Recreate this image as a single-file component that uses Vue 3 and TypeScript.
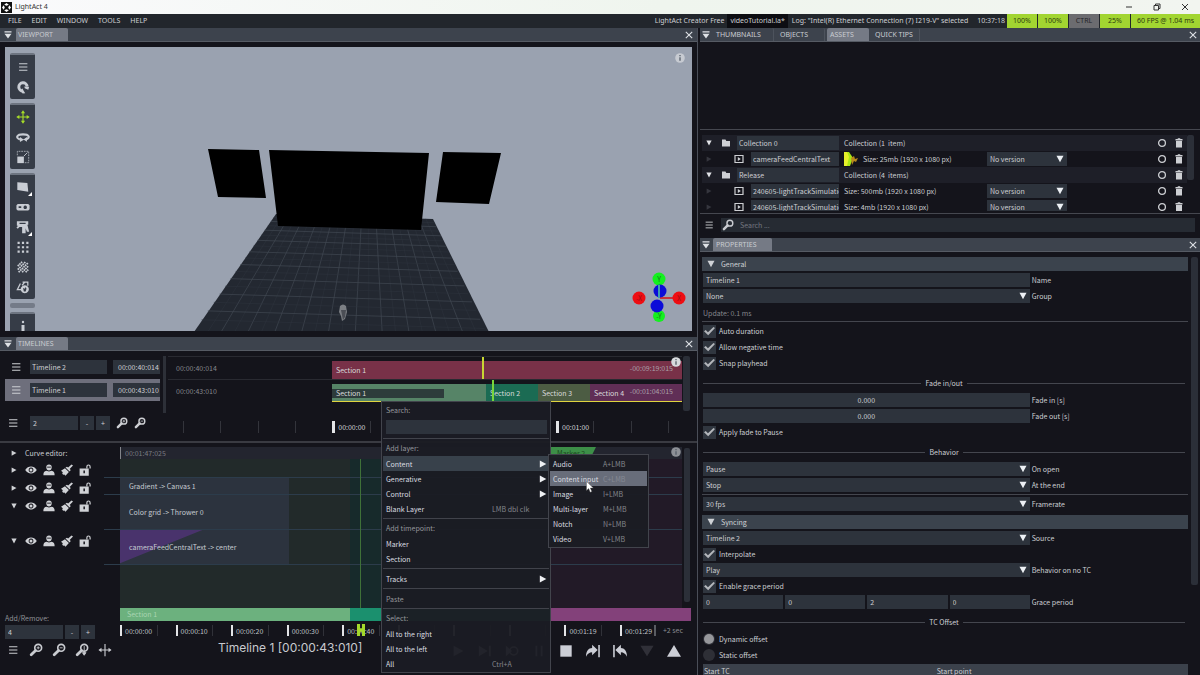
<script setup lang="ts">
import { ref } from 'vue'

const menus = ['FILE', 'EDIT', 'WINDOW', 'TOOLS', 'HELP']
const assetTabs = ['THUMBNAILS', 'OBJECTS', 'ASSETS', 'QUICK TIPS']

interface Asset { name: string; info: string; group?: boolean; thumb?: boolean }
const assets: Asset[] = [
  { name: 'Collection 0', info: 'Collection (1  item)', group: true },
  { name: 'cameraFeedCentralText', info: 'Size: 25mb (1920 x 1080 px)', thumb: true },
  { name: 'Release', info: 'Collection (4  items)', group: true },
  { name: '240605-lightTrackSimulation', info: 'Size: 500mb (1920 x 1080 px)' },
  { name: '240605-lightTrackSimulation', info: 'Size: 4mb (1920 x 1080 px)' },
]

type Kind = 'head' | 'text' | 'select' | 'num' | 'check' | 'radio' | 'quad' | 'sep' | 'line' | 'note'
interface Prop { kind: Kind; label?: string; value?: string; on?: boolean }
const props: Prop[] = [
  { kind: 'head', label: 'General' },
  { kind: 'text', label: 'Name', value: 'Timeline 1' },
  { kind: 'select', label: 'Group', value: 'None' },
  { kind: 'note', label: 'Update: 0.1 ms' },
  { kind: 'line' },
  { kind: 'check', label: 'Auto duration' },
  { kind: 'check', label: 'Allow negative time' },
  { kind: 'check', label: 'Snap playhead' },
  { kind: 'sep', label: 'Fade in/out' },
  { kind: 'num', label: 'Fade in [s]', value: '0.000' },
  { kind: 'num', label: 'Fade out [s]', value: '0.000' },
  { kind: 'check', label: 'Apply fade to Pause' },
  { kind: 'sep', label: 'Behavior' },
  { kind: 'select', label: 'On open', value: 'Pause' },
  { kind: 'select', label: 'At the end', value: 'Stop' },
  { kind: 'line' },
  { kind: 'select', label: 'Framerate', value: '30 fps' },
  { kind: 'head', label: 'Syncing' },
  { kind: 'select', label: 'Source', value: 'Timeline 2' },
  { kind: 'check', label: 'Interpolate' },
  { kind: 'select', label: 'Behavior on no TC', value: 'Play' },
  { kind: 'check', label: 'Enable grace period' },
  { kind: 'quad', label: 'Grace period' },
  { kind: 'sep', label: 'TC Offset' },
  { kind: 'radio', label: 'Dynamic offset', on: true },
  { kind: 'radio', label: 'Static offset', on: false },
]
const grace = ['0', '0', '2', '0']

const toolGroups = [
  ['burger', 'magnet'],
  ['move', 'rotate', 'scale'],
  ['screen', 'projector', 'fixture', 'dots', 'hatch', 'shapes'],
]

interface MenuRow { t: 'item' | 'title' | 'line' | 'input'; label?: string; key?: string; sub?: boolean; hot?: boolean; off?: boolean }
const context: MenuRow[] = [
  { t: 'title', label: 'Search:' },
  { t: 'input' },
  { t: 'line' },
  { t: 'title', label: 'Add layer:' },
  { t: 'item', label: 'Content', sub: true, hot: true },
  { t: 'item', label: 'Generative', sub: true },
  { t: 'item', label: 'Control', sub: true },
  { t: 'item', label: 'Blank Layer', key: 'LMB dbl clk' },
  { t: 'line' },
  { t: 'title', label: 'Add timepoint:' },
  { t: 'item', label: 'Marker' },
  { t: 'item', label: 'Section' },
  { t: 'line' },
  { t: 'item', label: 'Tracks', sub: true },
  { t: 'line' },
  { t: 'item', label: 'Paste', off: true },
  { t: 'line' },
  { t: 'title', label: 'Select:' },
  { t: 'item', label: 'All to the right' },
  { t: 'item', label: 'All to the left' },
  { t: 'item', label: 'All', key: 'Ctrl+A' },
]
const submenu = [
  ['Audio', 'A+LMB'],
  ['Content input', 'C+LMB'],
  ['Image', 'I+LMB'],
  ['Multi-layer', 'M+LMB'],
  ['Notch', 'N+LMB'],
  ['Video', 'V+LMB'],
]
const hovered = ref(1)

const overview = ['', '', '', '', '00:00:00', '', '', '', '', '', '00:01:00', '', '', '']
const ruler = ['00:00:00', '00:00:10', '00:00:20', '00:00:30', '00:00:40', '', '', '', '00:01:19', '00:01:29']
const layerRows = [
  { open: false, size: 'short' },
  { open: false, size: 'short' },
  { open: true, size: 'tall' },
  { open: true, size: 'tall' },
]

const gridLines: { d: string; strong: boolean }[] = []
for (let i = 1; i < 22; i++) {
  const f = i / 22
  gridLines.push({ d: `M${276 + 157 * f} ${214 + 5 * f}L${195 + 294 * f} 331`, strong: i % 2 === 0 })
}
for (let i = 1; i < 18; i++) {
  const p = i / 18
  const f = p * (0.53 + 0.47 * p)
  gridLines.push({ d: `M${276 - 81 * f} ${214 + 115 * f}L${433 + 56 * f} ${219 + 119 * f}`, strong: i % 2 === 0 })
}
</script>

<template>
  <div class="app">
    <svg class="defs" aria-hidden="true">
      <symbol id="down" viewBox="0 0 8 8"><path d="M.5.800h7L4 7.300z" /></symbol>
      <symbol id="right" viewBox="0 0 8 8"><path d="M.8.500v7L7.300 4z" /></symbol>
      <symbol id="drop" viewBox="0 0 8 8"><path d="M.5.3h7v1.200h-7zM.5 2.800h7L4 7.500z" /></symbol>
      <symbol id="close" viewBox="0 0 8 8"><path d="M.8.800l6.400 6.400M7.200.8L.8 7.200" fill="none" stroke="currentColor" stroke-width="1.100" /></symbol>
      <symbol id="burger" viewBox="0 0 16 16"><path d="M3.500 4.200h9.500M3.500 8h9.500M3.500 11.800h9.500" fill="none" stroke="currentColor" stroke-width="1.200" /></symbol>
      <symbol id="magnet" viewBox="0 0 16 16"><path d="M8 12.800A4.800 4.800 0 1 1 12.800 7.500" fill="none" stroke="currentColor" stroke-width="3.400" /><path d="M7 9.500l3.500 5.500-3 .5L5.500 12zM9.500 7.500l5.500.5-1 3-4-1.500z" /></symbol>
      <symbol id="move" viewBox="0 0 16 16"><path d="M8 2v12M2 8h12" stroke="currentColor" stroke-width="1.300" /><path d="M8 .3l2.400 3.500H5.600zM8 15.700l2.400-3.500H5.600zM.3 8l3.500-2.400v4.800zM15.700 8l-3.500-2.400v4.800z" /></symbol>
      <symbol id="rotate" viewBox="0 0 16 16"><path d="M4.500 10.800C-1 9 1 5 8 5s9 4 3 5.800" fill="none" stroke="currentColor" stroke-width="2.300" /><path d="M4.500 8l4.500 3-4.500 2.800zM12.500 8l-4 2.800 4 2.600z" /></symbol>
      <symbol id="scale" viewBox="0 0 16 16"><path d="M1.500 7.500H9V15H1.500z" /><path d="M1.500 6V1.500h13v13H10" fill="none" stroke="currentColor" stroke-width=".8" stroke-dasharray="2 1" /><path d="M9 7l4-4" stroke="currentColor" /></symbol>
      <symbol id="screen" viewBox="0 0 16 16"><path d="M1.500 2.500L13 3.500l1 10-12.500-2z" /></symbol>
      <symbol id="projector" viewBox="0 0 16 16"><path fill-rule="evenodd" d="M2 4.500h12l1.500 1.500v4.500L14 12H2L.5 10.500V6zM3 7v2.200h3V7zM10.500 6.300a2 2 0 1 0 .1 0z" /></symbol>
      <symbol id="fixture" viewBox="0 0 16 16"><path fill-rule="evenodd" d="M1 1.500h13v4h-1l2 8h-2.500L11 9.500V15H7V8H4L2 10 .5 8.500l2-2H1zM4 3.200v1.500h7V3.200z" /></symbol>
      <symbol id="dots" viewBox="0 0 16 16"><path d="M3 2v12.500M8 2v12.500M13 2v12.500" fill="none" stroke="currentColor" stroke-width="2.500" stroke-dasharray="2.500 2.500" /></symbol>
      <symbol id="hatch" viewBox="0 0 16 16"><path d="M2 7l5-5M2 11l9-9M3 14L14 3M7 14l7-7M11 14l3-3" fill="none" stroke="currentColor" stroke-width="2" stroke-dasharray="1.900 .7" /></symbol>
      <symbol id="shapes" viewBox="0 0 16 16"><path d="M5 4L1.500 11H6M7.500 2.500H13.500v4M7 6l3-3.500" fill="none" stroke="currentColor" stroke-width="1.400" /><path fill-rule="evenodd" d="M10 6a4.600 4.600 0 1 0 .1 0zM8 9l2 1 1-2 1 2-1 3H9z" /></symbol>
      <symbol id="eye" viewBox="0 0 16 16"><path fill-rule="evenodd" d="M.3 8C4 1.800 12 1.800 15.700 8 12 14.200 4 14.200.3 8zM8 4.800a3.200 3.200 0 1 0 .1 0z" /><circle cx="8" cy="8" r="2" /></symbol>
      <symbol id="person" viewBox="0 0 16 16"><path d="M8 .5a3.600 3.600 0 0 1 3.600 3.700C11.600 7 9.800 8.500 8 8.500S4.400 7 4.400 4.200A3.600 3.600 0 0 1 8 .5zM4.500 9L8 10l3.500-1c2.800.5 4 2 4 6H.5c0-4 1.200-5.500 4-6z" /><path d="M5.500 4.200h5" stroke="#14141b" stroke-width="1.200" /></symbol>
      <symbol id="brush" viewBox="0 0 16 16"><path d="M14 .5L16 2l-4.500 4.500 1.500 1.500-1.500 2L6 4.800 8 3.500l1.500 1zM5.300 5.500l5.200 5.200-4.500 5-2-2.200-1 1-1.500-2.200 1-1.300L0 9z" /></symbol>
      <symbol id="lock" viewBox="0 0 16 16"><path fill-rule="evenodd" d="M.8 6H13v9.500H.8zM5.900 8.500v3.800h2V8.500z" /><path d="M10.500 6V3.500a2 2 0 0 1 4.300 0V6" fill="none" stroke="currentColor" stroke-width="1.600" /></symbol>
      <symbol id="zoom" viewBox="0 0 16 16"><circle cx="10.500" cy="5.500" r="3.900" fill="none" stroke="currentColor" stroke-width="1.900" /><path d="M7.500 8.500L2.500 13.500" stroke="currentColor" stroke-width="3.200" stroke-linecap="round" /></symbol>
      <symbol id="zoomin" viewBox="0 0 16 16"><use href="#zoom" /><path d="M10.500 3.800v3.400M8.800 5.500h3.400" stroke="currentColor" /></symbol>
      <symbol id="zoomout" viewBox="0 0 16 16"><use href="#zoom" /><path d="M8.800 5.500h3.400" stroke="currentColor" /></symbol>
      <symbol id="zoomfit" viewBox="0 0 16 16"><use href="#zoom" /><path d="M10.500 3.500V13M8.500 11l2 3 2-3z" stroke="currentColor" /></symbol>
      <symbol id="fit" viewBox="0 0 16 16"><path d="M8 1v14M2 8h12" stroke="currentColor" stroke-width="1.300" /><path d="M.5 8L4 5.300v5.400zM15.500 8L12 5.300v5.400z" /></symbol>
      <symbol id="folder" viewBox="0 0 8 8"><path d="M0 .5h3.500L4.300 2H8v5.500H0z" /></symbol>
      <symbol id="clip" viewBox="0 0 10 10"><path d="M1 1.500h8v7H1z" fill="none" stroke="currentColor" stroke-width="1.200" /><path d="M3.800 3v4l3-2z" /></symbol>
      <symbol id="ring" viewBox="0 0 10 10"><circle cx="5" cy="5" r="3.400" fill="none" stroke="currentColor" stroke-width="1.300" /></symbol>
      <symbol id="trash" viewBox="0 0 8 10"><path fill-rule="evenodd" d="M.5 1h2l.5-.7h2l.5.700h2v1.400h-7zM1 3h6v6.500H1z" /></symbol>
      <symbol id="info" viewBox="0 0 10 10"><circle cx="5" cy="5" r="4.800" /><path d="M5 4.300v3.500M5 2v1.300" stroke="#555d68" stroke-width="1.300" /></symbol>
      <symbol id="play" viewBox="0 0 16 16"><path d="M3 2l11 6-11 6z" /></symbol>
      <symbol id="next" viewBox="0 0 16 16"><path d="M1 2l10 6-10 6zM12.500 2h2v12h-2z" /></symbol>
      <symbol id="loop" viewBox="0 0 16 16"><path d="M1 2l7 6-7 6z" /><circle cx="10" cy="8" r="4.500" fill="none" stroke="currentColor" stroke-width="1.800" /></symbol>
      <symbol id="pause" viewBox="0 0 16 16"><path d="M4 2h2v12H4zM10 2h2v12h-2z" /></symbol>
      <symbol id="stop" viewBox="0 0 16 16"><path d="M1.500 1.500h13v13h-13z" /></symbol>
      <symbol id="jump" viewBox="0 0 16 16"><path d="M0 14.500C0 8 3 4.500 7 4.500V.8l6.300 6L7 12.800V9.300C4 9.300 1.500 11 0 14.500zM14 1h1.800v14H14z" /></symbol>
      <symbol id="jumpback" viewBox="0 0 16 16"><path d="M16 14.500C16 8 13 4.500 9 4.500V.8l-6.300 6 6.300 6V9.300c3 0 5.500 1.700 7 5.200zM2 1H.2v14H2z" /></symbol>
      <symbol id="triup" viewBox="0 0 16 16"><path d="M8 1l8 13.500H0z" /></symbol>
      <symbol id="tridown" viewBox="0 0 16 16"><path d="M8 14L.5 2h15z" /></symbol>
    </svg>

    <header class="titlebar">
      <svg class="logo" viewBox="0 0 11 11"><path d="M0 0h11v11H0z" /><path d="M5.500 1L7.800 2.700 5.500 3.800 3.200 2.700zM5.500 10L3.200 8.300l2.300-1.100 2.300 1.100zM1 5.500l1.700-2.300 1.100 2.300-1.100 2.300zM10 5.500L8.300 7.800 7.200 5.500l1.100-2.300z" fill="#fff" /></svg>
      <span>LightAct 4</span>
      <div class="wincontrols">
        <button aria-label="Minimize"><svg viewBox="0 0 8 8"><path d="M1 4h6" stroke="#333" /></svg></button>
        <button aria-label="Restore"><svg viewBox="0 0 8 8"><path d="M1 2.500h4.500V7H1zM2.500 2.500V1H7v4.500H5.500" fill="none" stroke="#333" /></svg></button>
        <button aria-label="Close window"><svg viewBox="0 0 8 8"><path d="M1 1l6 6M7 1L1 7" stroke="#333" /></svg></button>
      </div>
    </header>

    <nav class="menubar">
      <button v-for="m in menus" :key="m">{{ m }}</button>
      <div class="status">
        <span class="edition">LightAct Creator Free</span>
        <span class="file">videoTutorial.la*</span>
        <span class="log">Log: "Intel(R) Ethernet Connection (7) I219-V" selected</span>
        <time class="clock">10:37:18</time>
        <span class="badge">100%</span>
        <span class="badge">100%</span>
        <span class="badge idle">CTRL</span>
        <span class="badge">25%</span>
        <span class="badge wide">60 FPS @ 1.04 ms</span>
      </div>
    </nav>

    <main class="workspace">
      <div class="left">
        <section class="panel viewport">
          <div class="tabs">
            <svg class="i8"><use href="#drop" /></svg>
            <button class="tab active fixed">VIEWPORT</button>
            <button class="x" aria-label="Close viewport"><svg class="i8"><use href="#close" /></svg></button>
          </div>
          <div class="stage">
            <svg class="scene" viewBox="5 47 687 284" preserveAspectRatio="xMidYMid slice">
              <path d="M5 47h687v284H5z" fill="#9aa2b0" />
              <path d="M276 214l157 5 56 113H194z" fill="#232831" />
              <path v-for="(l, i) in gridLines" :key="i" :d="l.d" :class="l.strong ? 'major' : 'minor'" />
              <path d="M208 149l51 1 7 48-48-1zM269 150l160 3-8 77-143-4zM443 152l58 1-12 51-53-2z" fill="#000" />
              <path d="M340 306q3-3 6 0l1 6-2 7-3 2-1-5-2-4z" fill="#7c7f84" /><path d="M341 310h5l-1 7-2 3z" fill="#4b4e55" />
              <path d="M660 298h19" stroke="#c8323c" stroke-width="2" />
              <circle cx="659" cy="279" r="6.500" fill="#14f01e" /><circle cx="659" cy="316" r="6" fill="#14f01e" />
              <circle cx="660" cy="291" r="6.500" fill="#0b0bd8" /><circle cx="657" cy="306" r="6.500" fill="#0b0bd8" />
              <circle cx="639" cy="298" r="6.500" fill="#ee0d12" /><circle cx="679" cy="298" r="6.500" fill="#ee0d12" />
              <path d="M659 285v13" stroke="#3f9cb0" stroke-width="2" />
              <text x="659" y="282" class="axis">Y</text><text x="659" y="319" class="axis">-Y</text>
              <text x="639" y="301" class="axis red">-X</text><text x="679" y="301" class="axis red">X</text>
            </svg>
            <div class="toolbar">
              <div v-for="(g, i) in toolGroups" :key="i" class="toolgroup">
                <button v-for="t in g" :key="t" :aria-label="t" :class="{ on: t === 'move', more: t === 'screen' || t === 'fixture' }">
                  <svg class="i14"><use :href="'#' + t" /></svg>
                </button>
              </div>
              <div class="handle"></div>
              <div class="toolgroup cut"><button aria-label="Person"><svg viewBox="0 0 14 14" class="i14"><circle cx="7" cy="3" r="1.200" /><path d="M5.500 6h3v6h-3z" /></svg></button></div>
            </div>
            <svg class="i10 stageinfo"><use href="#info" /></svg>
          </div>
        </section>

        <section class="panel timelines">
          <div class="tabs">
            <svg class="i8"><use href="#drop" /></svg>
            <button class="tab active fixed">TIMELINES</button>
            <button class="x" aria-label="Close timelines"><svg class="i8"><use href="#close" /></svg></button>
          </div>

          <div class="overview">
            <div class="names">
              <div class="tl"><svg class="i14"><use href="#burger" /></svg><input aria-label="Name of timeline 2" value="Timeline 2" /><output>00:00:40:014</output></div>
              <div class="tl picked"><svg class="i14"><use href="#burger" /></svg><input aria-label="Name of timeline 1" value="Timeline 1" /><output>00:00:43:010</output></div>
              <div class="stepper top">
                <svg class="i14"><use href="#burger" /></svg>
                <input aria-label="Visible timelines" value="2" /><button>-</button><button>+</button>
                <svg class="i12"><use href="#zoomin" /></svg><svg class="i12"><use href="#zoomout" /></svg>
              </div>
            </div>
            <div class="split"></div>
            <div class="lanes">
              <div class="lane"><span class="tc">00:00:40:014</span><div class="bar red"><span>Section 1</span><i>-00:09:19:015</i></div><b class="head h1"></b></div>
              <div class="lane low"><span class="tc">00:00:43:010</span>
                <div class="bar multi"><span class="s1">Section 1</span><span class="s2">Section 2</span><span class="s3">Section 3</span><span class="s4">Section 4</span><i>-00:01:04:015</i></div><b class="head h2"></b>
              </div>
              <div class="ticks">
                <span class="lead"></span>
                <span v-for="(t, i) in overview" :key="i" :class="{ mark: t }">{{ t }}</span>
              </div>
            </div>
            <div class="vbar"></div>
            <svg class="i10 laneinfo"><use href="#info" /></svg>
          </div>

          <div class="editor">
            <div class="layers">
              <div class="curve"><svg class="i6"><use href="#right" /></svg><span>Curve editor:</span></div>
              <div v-for="(l, i) in layerRows" :key="i" class="layer" :class="l.size">
                <svg class="i6"><use :href="l.open ? '#down' : '#right'" /></svg>
                <button aria-label="Visible"><svg class="i12"><use href="#eye" /></svg></button>
                <button aria-label="Solo"><svg class="i12"><use href="#person" /></svg></button>
                <button aria-label="Paint"><svg class="i12"><use href="#brush" /></svg></button>
                <button aria-label="Lock"><svg class="i12"><use href="#lock" /></svg></button>
              </div>
              <label class="addlabel" for="layercount">Add/Remove:</label>
              <div class="stepper"><input id="layercount" value="4" /><button>-</button><button>+</button></div>
            </div>
            <div class="canvas">
              <div class="zones"><i class="z1"></i><i class="z2"></i><i class="z3"></i></div>
              <div class="caption"><span>00:01:47:025</span></div>
              <div class="track short"><div class="clip">Gradient -&gt; Canvas 1</div></div>
              <div class="track tall"><div class="clip">Color grid -&gt; Thrower 0</div></div>
              <div class="track tall"><div class="clip fade">cameraFeedCentralText -&gt; center</div></div>
              <div class="track rest"></div>
              <div class="needle"></div>
              <div class="marker">Marker 2</div>
              <div class="vbar inner"></div>
              <svg class="i10 canvasinfo"><use href="#info" /></svg>
              <div class="sections"><span class="a">Section 1</span><span class="b"></span><span class="c"></span></div>
              <div class="ruler"><span v-for="(r, i) in ruler" :key="i">{{ r }}</span><em>+2 sec</em><b class="grip"></b></div>
            </div>
          </div>

          <footer class="transport">
            <div class="tools">
              <button v-for="t in ['burger', 'zoomin', 'zoomout', 'zoomfit', 'fit']" :key="t" :aria-label="t"><svg class="i14"><use :href="'#' + t" /></svg></button>
            </div>
            <div class="now">Timeline 1 [00:00:43:010]</div>
            <div class="buttons">
              <button v-for="t in ['play', 'next', 'loop', 'pause', 'stop', 'jump', 'jumpback', 'tridown', 'triup']" :key="t" :aria-label="t" :class="{ dim: t === 'tridown' }"><svg class="i14"><use :href="'#' + t" /></svg></button>
            </div>
          </footer>
        </section>
      </div>

      <div class="right">
        <section class="panel assets">
          <div class="tabs">
            <svg class="i8"><use href="#drop" /></svg>
            <button v-for="t in assetTabs" :key="t" class="tab" :class="{ active: t === 'ASSETS' }">{{ t }}</button>
            <button class="x" aria-label="Close assets"><svg class="i8"><use href="#close" /></svg></button>
          </div>
          <div class="blank"></div>
          <div class="list">
            <div class="rows">
              <div v-for="(a, i) in assets" :key="i" class="asset" :class="{ group: a.group }">
                <svg class="i6 arrow" :class="{ faint: !a.group }"><use :href="a.group ? '#down' : '#right'" /></svg>
                <svg class="kind" :class="a.group ? 'i8' : 'i10'"><use :href="a.group ? '#folder' : '#clip'" /></svg>
                <input :value="a.name" :aria-label="'Asset name ' + (i + 1)" />
                <div class="desc">
                  <svg v-if="a.thumb" class="thumb" viewBox="0 0 15 14"><path d="M0 0h5l4 6-3 8H0z" fill="#a8e614" /><path d="M0 0h3l2 5-2 9H0z" fill="#e6f02a" /><path d="M7 6l3-2 1 3 3-1-2 4-2-1-2 4z" fill="#b98a1c" /></svg>
                  <span>{{ a.info }}</span>
                </div>
                <div class="drop version" v-if="!a.group"><select :aria-label="'Version ' + (i + 1)"><option>No version</option></select><svg class="i8"><use href="#down" /></svg></div>
                <div v-else class="version"></div>
                <button aria-label="Reload"><svg class="i10"><use href="#ring" /></svg></button>
                <button aria-label="Delete"><svg class="i10"><use href="#trash" /></svg></button>
              </div>
            </div>
            <div class="vbar"></div>
          </div>
          <div class="search"><svg class="i12"><use href="#burger" /></svg><label for="find"><svg class="i12"><use href="#zoom" /></svg></label><input id="find" placeholder="Search ..." /></div>
        </section>

        <section class="panel properties">
          <div class="tabs">
            <svg class="i8"><use href="#drop" /></svg>
            <button class="tab active wide">PROPERTIES</button>
            <button class="x" aria-label="Close properties"><svg class="i8"><use href="#close" /></svg></button>
          </div>
          <div class="propbody">
            <div class="form">
              <template v-for="(p, i) in props" :key="i">
                <button v-if="p.kind === 'head'" class="head-row"><svg class="i8"><use href="#down" /></svg>{{ p.label }}</button>
                <div v-else-if="p.kind === 'line'" class="line"></div>
                <div v-else-if="p.kind === 'note'" class="note">{{ p.label }}</div>
                <div v-else-if="p.kind === 'sep'" class="sep"><span>{{ p.label }}</span></div>
                <label v-else-if="p.kind === 'check'" class="tick"><input type="checkbox" checked />{{ p.label }}</label>
                <label v-else-if="p.kind === 'radio'" class="tick"><input type="radio" name="offset" :checked="p.on" />{{ p.label }}</label>
                <div v-else class="field">
                  <div v-if="p.kind === 'select'" class="drop"><select :id="'p' + i"><option>{{ p.value }}</option></select><svg class="i8"><use href="#down" /></svg></div>
                  <div v-else-if="p.kind === 'quad'" class="quad"><input v-for="(g, n) in grace" :key="n" :id="n === 0 ? 'p' + i : undefined" :aria-label="'Grace period ' + (n + 1)" :value="g" /></div>
                  <input v-else :id="'p' + i" :value="p.value" :class="{ num: p.kind === 'num' }" />
                  <label :for="'p' + i">{{ p.label }}</label>
                </div>
              </template>
              <table><thead><tr><th>Start TC</th><th>Start point</th></tr></thead></table>
            </div>
            <div class="vbar"></div>
          </div>
        </section>
      </div>
    </main>

    <div class="menu context" role="menu">
      <template v-for="(m, i) in context" :key="i">
        <div v-if="m.t === 'title'" class="mtitle">{{ m.label }}</div>
        <div v-else-if="m.t === 'line'" class="mline"></div>
        <input v-else-if="m.t === 'input'" aria-label="Search layers" />
        <button v-else role="menuitem" :class="{ hot: m.hot, off: m.off }"><span>{{ m.label }}</span><kbd>{{ m.key }}</kbd><svg v-if="m.sub" class="i8"><use href="#right" /></svg></button>
      </template>
    </div>
    <div class="menu sub" role="menu">
      <button v-for="(s, i) in submenu" :key="s[0]" role="menuitem" :class="{ over: hovered === i }" @mouseenter="hovered = i"><span>{{ s[0] }}</span><kbd>{{ s[1] }}</kbd></button>
    </div>
    <svg class="pointer" viewBox="0 0 8 12"><path d="M.5.500v9l2.200-2 1.500 3.800 1.600-.7-1.500-3.600h3z" fill="#fff" stroke="#555" stroke-width=".4" /></svg>
  </div>
</template>

<style>
html, body { background: #13131a; overflow: hidden; }
</style>

<style scoped>
.app { position: relative; height: 100vh; display: flex; flex-direction: column; overflow: hidden; background: #14141b; color: #cdcfd3; font-family: "Noto Sans CJK SC", "Noto Sans", sans-serif; font-size: 7px; line-height: 14px; }
.app * { box-sizing: border-box; }
.defs { position: absolute; width: 0; height: 0; }
button, input, select { font: inherit; color: inherit; border: 0; border-radius: 0; margin: 0; padding: 0; background: none; outline: none; min-width: 0; }
button { display: flex; align-items: center; }
svg { fill: currentColor; display: block; flex: none; }
input, select { height: 14px; background: #2d333c; padding: 0 3px; }
select { appearance: none; width: 100%; display: block; }
.i6 { width: 6px; height: 6px; }
.i8 { width: 8px; height: 8px; }
.i10 { width: 10px; height: 10px; }
.i12 { width: 12px; height: 12px; }
.i14 { width: 14px; height: 14px; }

.titlebar { height: 14px; flex: none; display: flex; align-items: center; gap: 3px; padding-left: 1px; background: linear-gradient(90deg, #fafafc, #eff5ee 55%, #f2f5f0); color: #333; font-family: "Noto Sans", sans-serif; }
.logo { width: 11px; height: 11px; fill: #111; }
.wincontrols { margin-left: auto; display: flex; gap: 20px; padding-right: 11px; }
.wincontrols svg { width: 8px; height: 8px; }
.menubar { height: 14px; flex: none; display: flex; background: #22262c; padding-left: 8px; gap: 10px; font-family: "Noto Sans", sans-serif; }
.status { display: flex; margin-left: auto; white-space: nowrap; gap: 1px; }
.edition { padding-right: 2px; }
.file { background: #0d0d12; padding: 0 3px; }
.log { padding: 0 8px 0 3px; }
.clock { padding-right: 1px; }
.badge { width: 30px; text-align: center; background: #a2d531; color: #2c3a10; }
.badge.idle { background: #6c6c70; color: #26262a; }
.badge.wide { width: 69px; }

.workspace { flex: 1; min-height: 0; display: grid; grid-template-columns: 698fr 502fr; }
.left, .right { min-width: 0; min-height: 0; display: grid; }
.left { grid-template-rows: minmax(0, 309fr) minmax(0, 338fr); border-right: 1px solid #4a4e58; }
.right { grid-template-rows: minmax(0, 210fr) minmax(0, 437fr); padding-left: 2px; }
.panel { display: flex; flex-direction: column; min-height: 0; min-width: 0; }
.tabs { height: 14px; flex: none; display: flex; align-items: center; background: #3d434d; border-bottom: 1px solid #565b64; padding-left: 4px; color: #dfe2e6; font-family: "Noto Sans", sans-serif; }
.right .tabs { padding-left: 2px; }
.tab { height: 13px; padding: 0 4px; margin-left: 2px; border-right: 1px solid #4d535d; border-radius: 2px 2px 0 0; color: #c9ccd1; }
.tab.fixed { width: 52px; margin-left: 4px; padding-left: 2px; }
.right .tab { min-width: 49px; }
.right .tab:nth-of-type(1) { width: 61px; margin-left: 3px; padding-left: 3px; }
.right .tab.active:nth-of-type(3) { min-width: 40px; width: 42px; padding-left: 3px; }
.right .tab.wide { margin-left: 3px; width: 59px; }
.tab.active { background: #757a85; border-color: #757a85; }
.x { margin-left: auto; padding-right: 4px; }
.right .x { padding-right: 3px; }
.vbar { background: #2b2f38; border-radius: 2px; }

.stage { flex: 1; min-height: 0; position: relative; margin: 5px 5px 6px 5px; overflow: hidden; background: #9aa2b0; }
.scene { position: absolute; inset: 0; width: 100%; height: 100%; }
.major { stroke: #414852; stroke-width: .7; }
.minor { stroke: #2f353f; stroke-width: .5; }
.axis { font-size: 7px; text-anchor: middle; fill: #157a18; }
.axis.red { fill: #a30a10; }
.toolbar { position: relative; display: flex; flex-direction: column; gap: 4px; width: 25px; margin: 6px 0 0 5px; }
.toolgroup { background: #363c47; border-top: 2px solid #6d7480; border-radius: 2px; padding: 2px 0; display: flex; flex-direction: column; color: #c9cdd4; }
.toolgroup button { height: 20px; justify-content: center; position: relative; }
.toolgroup .on { color: #a6dc28; }
.toolgroup .more::after { content: ""; position: absolute; right: 3px; bottom: 1px; border: 2px solid transparent; border-right-color: #fff; border-bottom-color: #fff; }
.handle { height: 5px; background: #747b88; border-radius: 2px; }
.stageinfo { position: absolute; right: 7px; top: 6px; color: #c7cbd2; }

.overview { position: relative; flex: none; height: 92px; padding-top: 5px; display: grid; grid-template-columns: 160px 8px minmax(0, 1fr) 15px; border-bottom: 2px solid #3a3b42; }
.names { padding-left: 5px; }
.tl { height: 22px; display: flex; align-items: center; gap: 6px; padding-left: 4px; margin-bottom: 1px; }
.tl svg { margin-right: 1px; }
.tl input { flex: 1; padding-left: 2px; }
.tl output { width: 47px; height: 14px; background: #2d333c; padding-left: 5px; overflow: hidden; }
.tl.picked { background: #6e6f7c; }
.stepper { display: flex; gap: 2px; align-items: center; }
.stepper input { width: 58px; }
.stepper button { width: 14px; height: 14px; background: #2d333c; justify-content: center; }
.stepper.top { margin-top: 15px; padding-left: 1px; }
.stepper.top input { width: 48px; margin-left: 8px; }
.stepper.top svg ~ svg { margin-left: 4px; }
.split { width: 3px; height: 57px; margin-left: 3px; background: #2d3038; }
.lanes { min-width: 0; }
.lane { position: relative; height: 23px; display: grid; grid-template-columns: minmax(0, 164fr) minmax(0, 350fr); border-top: 1px solid #292a31; }
.tc { padding: 4px 0 0 8px; color: #85878d; }
.bar { position: relative; color: #d9dadc; white-space: nowrap; }
.bar i { position: absolute; right: 9px; top: 0; font-style: normal; color: #aaa0a8; }
.bar.red { margin-top: 4px; background: #783148; padding: 2px 0 0 4px; }
.bar.multi { display: grid; grid-template-columns: minmax(0, 154fr) minmax(0, 52fr) minmax(0, 52fr) minmax(0, 92fr); margin-top: 4px; border-bottom: 1px solid #dfd43f; }
.bar.multi span { padding: 2px 0 0 4px; }
.bar.multi .s1 { background: linear-gradient(#2d3c3b, #2d3c3b) 0 5px / 112px 9px no-repeat, #568467; }
.bar.multi .s2 { background: #1b6b53; }
.bar.multi .s3 { background: #4c5c43; }
.bar.multi .s4 { background: #602e56; }
.head { position: absolute; top: 0; bottom: 0; width: 2px; background: #c8d633; }
.h1 { left: 61%; }
.h2 { left: 63%; background: #79d63c; }
.ticks { display: grid; grid-template-columns: 15fr repeat(13, minmax(0, 37fr)) 14fr; margin-top: 18px; height: 14px; align-items: center; }
.ticks span { min-width: 0; height: 12px; border-left: 1px solid #33343b; line-height: 13px; white-space: nowrap; }
.ticks .lead { border: 0; }
.ticks .mark { border-left: 3px solid #e4e5e8; padding-left: 3px; color: #d2d3d6; }
.overview > .vbar { width: 7px; height: 55px; margin-left: 1px; }
.laneinfo { position: absolute; right: 16px; top: 6px; color: #d7dadd; }

.editor { flex: 1; min-height: 0; display: grid; grid-template-columns: 120px minmax(0, 1fr); }
.layers { display: flex; flex-direction: column; padding: 2px 0 0 5px; }
.curve { display: flex; align-items: center; height: 16px; gap: 8px; padding-left: 6px; }
.layer { display: flex; align-items: flex-start; padding: 3px 0 0 6px; gap: 6px; color: #d0d2d6; }
.layer .i6 { margin: 3px 2px 0 0; }
.layer.short { height: 18px; }
.layer.tall { height: 35px; }
.addlabel { margin-top: auto; color: #8f9196; }
.layers .stepper { height: 14px; margin-bottom: 1px; }
.canvas { position: relative; min-width: 0; display: flex; flex-direction: column; padding-top: 4px; margin-right: 6px; }
.zones { position: absolute; inset: 4px 9px 32px 0; display: flex; }
.z1 { flex: 230; background: #222a2a; }
.z2 { flex: 200; background: #172a2b; }
.z3 { flex: 132; background: #221a27; }
.caption { position: relative; height: 30px; flex: none; margin-right: 9px; background: linear-gradient(#23252f, #23252f) 0 0 / 100% 12px no-repeat; padding-left: 4px; border-left: 1px solid #82848a; border-image: linear-gradient(#82848a 12px, transparent 12px) 1; color: #797b81; line-height: 13px; }
.track { position: relative; border-top: 1px solid #2c3c4b; margin: 0 9px 0 -16px; padding-left: 16px; }
.track.short { height: 17px; }
.track.tall { height: 35px; }
.track.rest { flex: 1; }
.clip { width: 30%; height: 100%; padding-left: 9px; background: #2c333e; display: flex; align-items: center; color: #c6cbd1; white-space: nowrap; }
.fade { background: linear-gradient(158deg, #49336c 32%, #2c333e 33%); }
.needle { position: absolute; left: 42%; top: 16px; bottom: 32px; width: 1px; background: #3f7138; }
.marker { position: absolute; left: 430px; right: 95px; top: 4px; height: 11px; background: #3d8f48; clip-path: polygon(0 0, 100% 0, 88% 100%, 0 100%); padding-left: 7px; line-height: 12px; color: #1b4a20; }
.vbar.inner { position: absolute; right: 1px; top: 5px; bottom: 38px; width: 6px; }
.canvasinfo { position: absolute; right: 10px; top: 4px; color: #8d9096; }
.sections { display: grid; grid-template-columns: minmax(0, 230fr) minmax(0, 200fr) minmax(0, 141fr); height: 12px; flex: none; border-bottom: 1px solid #c9a44c; line-height: 13px; }
.sections .a { background: #6cb17e; padding-left: 7px; color: #a9d5b2; }
.sections .b { background: #1b906e; }
.sections .c { background: #83417a; }
.ruler { position: relative; display: grid; grid-template-columns: repeat(9, minmax(0, 555fr)) minmax(0, 360fr) minmax(0, 350fr); height: 20px; align-items: center; flex: none; white-space: nowrap; }
.ruler span { height: 11px; line-height: 12px; border-left: 2px solid #e3e4e7; padding-left: 3px; color: #bfc1c5; background: linear-gradient(#303138, #303138) 100% 0 / 1px 100% no-repeat; margin-right: 18px; }
.ruler span:nth-of-type(10) { margin-right: 0; border-right: 2px solid #5a5c62; background: none; }
.ruler em { height: 12px; line-height: 12px; padding-left: 7px; font-style: normal; color: #8a8c92; }
.grip { position: absolute; left: 237px; top: 4px; width: 8px; height: 12px; background: #a4d92c; clip-path: polygon(0 0, 38% 0, 38% 35%, 62% 35%, 62% 0, 100% 0, 100% 100%, 62% 100%, 62% 65%, 38% 65%, 38% 100%, 0 100%); }
.transport { flex: none; height: 35px; display: grid; grid-template-columns: 213px minmax(0, 1fr) 250px; }
.tools { display: flex; gap: 9px; padding: 2px 0 0 6px; height: 17px; color: #c9cbd0; }
.now { font-family: Inter, sans-serif; font-size: 12px; padding: 1px 0 0 5px; color: #c8cacf; white-space: nowrap; }
.buttons { display: flex; height: 18px; padding: 3px 0 0 4px; gap: 13px; color: #ccced6; }
.buttons .dim { color: #303038; }

.blank { flex: 1; border-bottom: 1px solid #45474f; }
.list { height: 84px; flex: none; display: grid; grid-template-columns: minmax(0, 1fr) 13px; padding: 5px 0 2px; border-bottom: 1px solid #45474f; }
.rows { overflow: hidden; padding-left: 2px; }
.asset { height: 16px; display: flex; align-items: center; background: #14141b; padding: 1px 0; }
.asset.group { background: #1e1f28; }
.arrow { margin: 0 10px 0 4px; color: #e2e4e8; }
.faint { color: #35363e; }
.kind { margin-right: 7px; }
.asset .i10.kind { margin: 0 7px 0 12px; }
.asset input { width: 88px; padding: 0 0 0 2px; }
.asset.group input { width: 102px; }
.desc { display: flex; width: 148px; height: 14px; padding-left: 5px; white-space: pre; gap: 4px; }
.thumb { width: 15px; height: 14px; }
.version { width: 80px; margin-right: auto; }
.drop { position: relative; }
.drop svg { position: absolute; right: 3px; top: 3px; color: #edf1f5; pointer-events: none; }
.asset button { width: 17px; justify-content: center; }
.list .vbar { width: 7px; height: 45px; }
.search { height: 24px; flex: none; display: grid; grid-template-columns: 12px 12px minmax(0, 1fr); align-items: center; padding: 0 5px 3px 3px; }
.search label { height: 14px; margin-left: 6px; padding: 1px; background: #262b33; width: 16px; color: #c9cbd0; z-index: 1; }
.search input { padding-left: 13px; background: #262b33; }
.search input::placeholder { color: #747880; }

.propbody { flex: 1; min-height: 0; display: grid; grid-template-columns: minmax(0, 1fr) 9px; padding-top: 5px; column-gap: 3px; overflow: hidden; }
.form { display: flex; flex-direction: column; gap: 2px; min-width: 0; padding-left: 3px; }
.head-row { height: 14px; flex: none; background: #3b434d; margin-left: -1px; padding-left: 5px; gap: 6px; color: #cfd2d6; }
.head-row:not(:first-child) { margin-top: 2px; }
.field { display: grid; grid-template-columns: 326fr 156fr; column-gap: 2px; flex: none; height: 14px; }
.field > input { width: 100%; }
.num { text-align: center; }
.quad { display: grid; grid-template-columns: repeat(4, minmax(0, 1fr)); gap: 2px; }
.note { color: #85878d; height: 12px; line-height: 12px; margin-top: 2px; flex: none; }
.line { height: 1px; flex: none; background: #44464e; margin-left: -1px; }
.tick { display: flex; align-items: center; height: 14px; flex: none; gap: 3px; }
.tick input { appearance: none; width: 13px; height: 13px; background: #30363f; padding: 0; position: relative; }
.tick input:checked::after { content: ""; position: absolute; inset: 2px 1px; background: #b3b6bb; clip-path: polygon(0 52%, 16% 40%, 36% 64%, 86% 5%, 100% 16%, 38% 96%); }
.tick input[type="radio"] { border-radius: 50%; width: 12px; height: 12px; margin-right: 1px; background: #2e2f36; }
.tick input[type="radio"]:checked::after { inset: 1px; border-radius: 50%; clip-path: none; background: #96979b; }
.sep { display: flex; align-items: center; height: 14px; flex: none; gap: 4px; margin: 4px 3px 1px 0; }
.sep::before, .sep::after { content: ""; flex: 1; height: 1px; background: #44464e; }
table { border-collapse: collapse; width: 100%; table-layout: fixed; background: #3b414b; }
th { font-weight: 400; text-align: left; padding: 0 1px; }
th:first-child { width: 48%; }
.propbody > .vbar { width: 7px; height: 78%; align-self: start; }

.menu { position: absolute; background: rgba(27, 28, 35, .96); border: 1px solid #42444c; display: flex; flex-direction: column; color: #dcdee1; }
.menu button { height: 15px; flex: none; padding: 0 3px; }
.menu kbd { font: inherit; color: #85878d; }
.context { left: 381px; top: 401px; width: 170px; padding: 1px; }
.context button span { width: 106px; text-align: left; }
.context input { margin: 2px 2px 2px 3px; height: 14px; flex: none; }
.context svg { margin-left: auto; margin-right: -1px; color: #eef0f3; }
.mtitle { height: 15px; padding-left: 3px; color: #95979c; flex: none; }
.mline { height: 5px; flex: none; background: linear-gradient(#41434b, #41434b) 0 2px / 100% 1px no-repeat; }
.menu .hot { background: #38414b; }
.menu .off { color: #94969b; }
.sub { left: 548px; top: 454px; width: 101px; padding: 1px; }
.sub button span { width: 50px; text-align: left; white-space: nowrap; }
.menu .over { background: #686d7a; }
.menu .over kbd { color: #858994; }
.pointer { position: absolute; left: 586px; top: 481px; width: 8px; height: 12px; }
</style>
